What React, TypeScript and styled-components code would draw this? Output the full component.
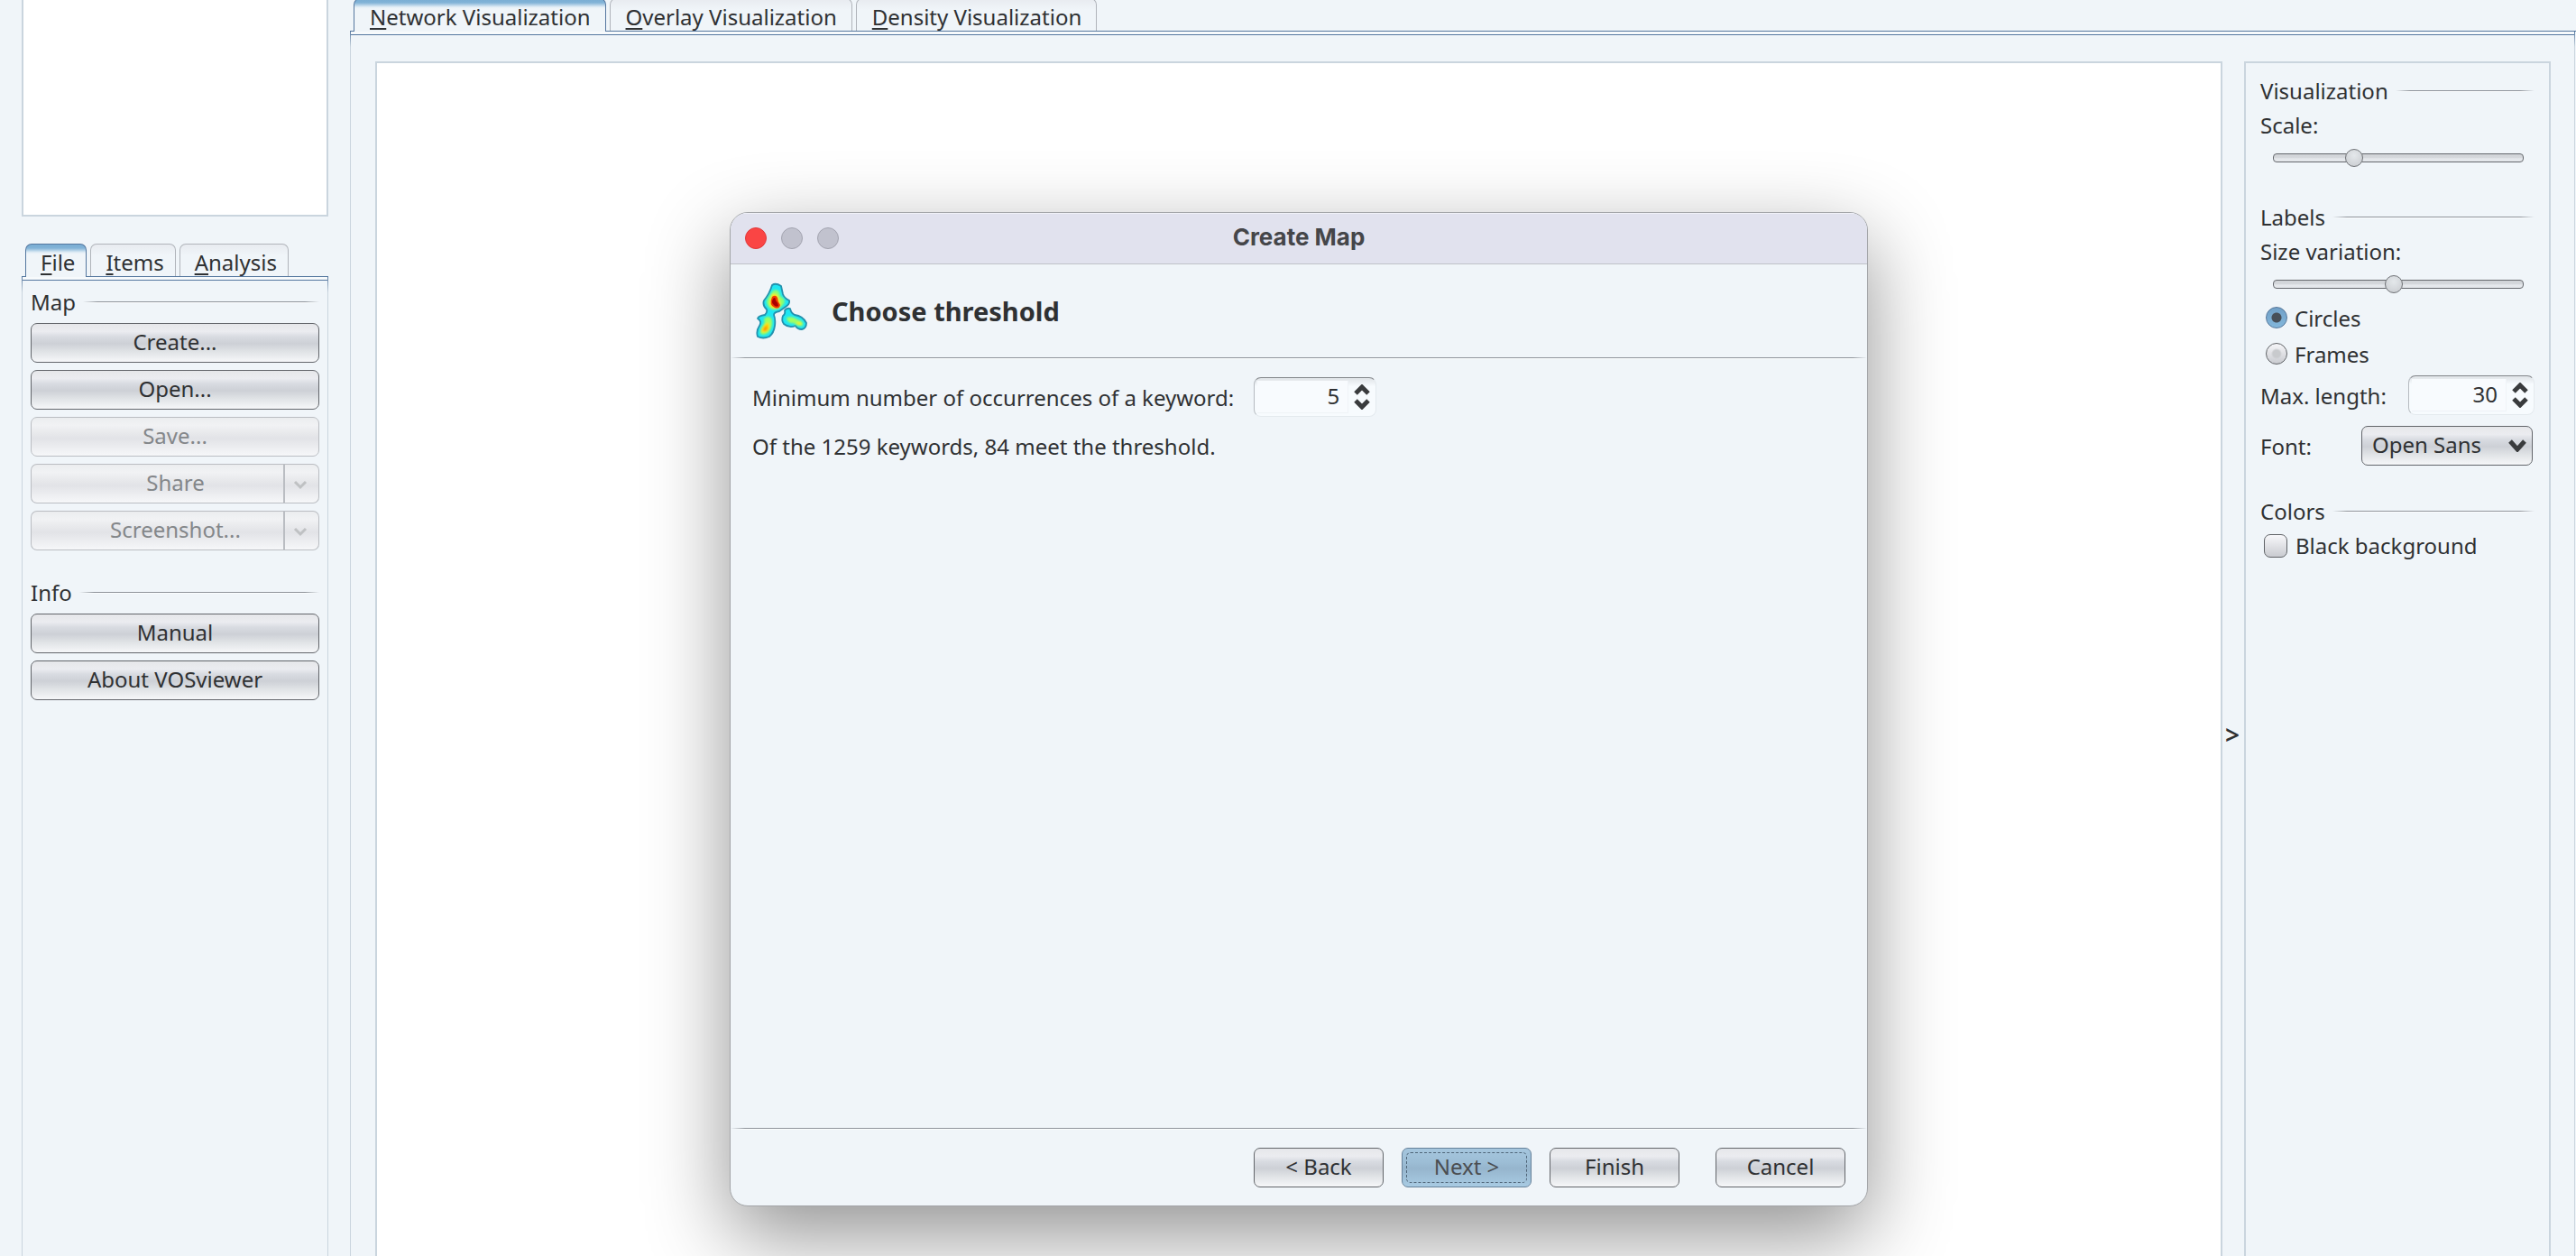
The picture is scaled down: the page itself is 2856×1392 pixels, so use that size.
import React from "react";
import styled, { createGlobalStyle, css } from "styled-components";

const color = {
  panel: "#f0f5f9",
  frame: "#cad5de",
  text: "#2f3133",
  muted: "#84878a",
  tabLine: "#55779f",
  tabIdle: "#b0b4ba",
};

const uiFont = '"Noto Sans", "Open Sans", sans-serif';

const GlobalStyle = createGlobalStyle`
  *, *::before, *::after { box-sizing: border-box; }
  body {
    margin: 0;
    background: ${color.panel};
    color: ${color.text};
    font-family: ${uiFont};
    font-size: 24px;
    line-height: 32px;
  }
  button, input, select {
    margin: 0;
    font: inherit;
    color: inherit;
  }
`;

/* ---------- window layout ---------- */

const Viewport = styled.div`
  height: 100vh;
  overflow: hidden;
`;

const Workspace = styled.div`
  display: flex;
  height: calc(100vh + 168px);
`;

const LeftColumn = styled.aside`
  display: flex;
  flex-direction: column;
  flex: 0 0 388px;
  padding: 0 24px;
`;

const Overview = styled.div`
  flex: none;
  height: 240px;
  margin-bottom: 30px;
  background: #fff;
  border: 2px solid ${color.frame};
  border-top: 0;
`;

const MainColumn = styled.main`
  display: flex;
  flex-direction: column;
  flex: 1;
  min-width: 0;
  margin-top: -2px;
`;

const TabStrip = styled.div`
  display: flex;
  gap: 4px;
  flex: none;
  height: 37px;
  padding-left: 4px;
  border-bottom: 1px solid ${color.tabLine};
`;

const Tab = styled.button<{ $active?: boolean; $wide?: boolean }>`
  height: 36px;
  padding: 4px ${(p) => (p.$wide ? 16 : 12)}px 0 ${(p) => (p.$wide ? 17 : 16)}px;
  border: 1px solid ${color.tabIdle};
  border-bottom: 0;
  border-radius: 7px 7px 0 0;
  background: linear-gradient(#e8ebf0, ${color.panel} 12px);
  line-height: 30px;
  white-space: nowrap;
  ${(p) =>
    p.$active &&
    css`
      height: 37px;
      border-color: ${color.tabLine};
      background: linear-gradient(#79add3, #82b3d7 4px, #e6f0f7 9px, ${color.panel} 11px);
    `}
`;

const Mnemonic = styled.span`
  text-decoration: underline;
  text-decoration-thickness: 2px;
  text-underline-offset: 3px;
  text-decoration-skip-ink: none;
`;

const TabBody = styled.div`
  display: flex;
  flex: 1;
  min-height: 0;
  border: 1px solid;
  border-bottom: 0;
  border-image: linear-gradient(${color.tabLine}, ${color.frame} 18px) 1;
  background: linear-gradient(#f7fafc 3px, ${color.tabLine} 3px, ${color.tabLine} 4px, transparent 4px);
`;

const FilePanel = styled(TabBody)`
  flex-direction: column;
  gap: 8px;
  border-top: 0;
  padding: 11px 9px 0;
`;

const MainPanel = styled(TabBody)`
  margin-right: 1px;
  border-top: 0;
  padding: 33px 26px 0 27px;
`;

const Canvas = styled.div`
  position: relative;
  flex: 1;
  min-width: 0;
  background: #fff;
  border: 2px solid ${color.frame};
`;

const Collapse = styled.button`
  flex: 0 0 24px;
  padding: 0 2px 0 0;
  border: 0;
  background: none;
  font-size: 28px;
  font-weight: 600;
  text-align: center;
`;

const Options = styled.aside`
  display: flex;
  flex-direction: column;
  flex: 0 0 340px;
  padding: 14px 16px 0;
  border: 2px solid ${color.frame};
`;

/* ---------- shared controls ---------- */

const HeadingRow = styled.h2<{ $spaced?: boolean }>`
  display: flex;
  align-items: center;
  gap: 8px;
  margin: ${(p) => (p.$spaced ? "22px 0 0" : "0")};
  padding-top: 2px;
  font-size: 24px;
  font-weight: 400;
  line-height: 30px;
`;

const Rule = styled.span`
  flex: 1;
  height: 2px;
  background:
    linear-gradient(90deg, transparent, #8f949b 16px, #8f949b calc(100% - 16px), transparent) top / 100% 1px no-repeat,
    linear-gradient(90deg, transparent, #fbfdfe 16px, #fbfdfe calc(100% - 16px), transparent) bottom / 100% 1px no-repeat;
`;

const glossy = css`
  border: 1px solid #62656a;
  border-radius: 7px;
  background: linear-gradient(#e6e7ea, #ebecf0 20%, #d8dbe1 34%, #cdd0d6 52%, #dfe2e5 72%, #f6f7f9);
`;

const Button = styled.button`
  flex: none;
  height: 44px;
  padding: 0 8px 2px;
  ${glossy}
  &:disabled {
    border-color: #babdc2;
    background: linear-gradient(#ebedef, #f1f2f4 20%, #e6e7ea 45%, #e2e3e7 55%, #f6f7f9);
    color: ${color.muted};
  }
`;

const Split = styled.div`
  display: flex;
  flex: none;
`;

const SplitMain = styled(Button)`
  flex: 1;
  padding-left: 48px;
  border-right: 0;
  border-radius: 7px 0 0 7px;
`;

const SplitArrow = styled(Button)`
  flex: 0 0 40px;
  display: flex;
  align-items: center;
  justify-content: center;
  padding: 2px 4px 0 0;
  border-left-width: 2px;
  border-radius: 0 7px 7px 0;
`;

const SpinBox = styled.span<{ $width: number }>`
  display: flex;
  flex: none;
  width: ${(p) => p.$width}px;
  height: 44px;
  border: 1px solid #e4eaee;
  border-top-color: #85888c;
  border-left-color: #b5babf;
  border-radius: 8px;
  background: linear-gradient(#dfe3e7, #f7fbfe 9px);
`;

const SpinInput = styled.input`
  flex: 1;
  min-width: 0;
  margin: 3px 0 3px 3px;
  padding: 0 9px 2px 0;
  border: 0;
  border-right: 1px solid #eff3f7;
  border-bottom: 1px solid #eff3f7;
  background: #f8fbfe;
  text-align: right;
`;

const SpinButtons = styled.span`
  display: flex;
  flex-direction: column;
  justify-content: center;
  gap: 4px;
  flex: 0 0 30px;
`;

const SpinButton = styled.button`
  display: flex;
  justify-content: center;
  padding: 0;
  border: 0;
  background: none;
`;

const Slider = styled.input`
  appearance: none;
  display: block;
  height: 30px;
  margin: 6px 12px 0 14px;
  background: none;
  &::-webkit-slider-runnable-track {
    height: 10px;
    border: 1px solid #66696e;
    border-radius: 4px;
    background: linear-gradient(#d0d3d7, #d5d8dc 50%, #e6e9ed 60%, #e3e6ea);
  }
  &::-webkit-slider-thumb {
    appearance: none;
    width: 20px;
    height: 20px;
    margin-top: -6px;
    border: 1px solid #6f7276;
    border-radius: 50%;
    background: radial-gradient(circle at 50% 35%, #e4e8eb, #cdd0d4 80%);
  }
`;

const Caption = styled.label<{ $spaced?: boolean }>`
  margin-top: ${(p) => (p.$spaced ? "6px" : "0")};
  padding-top: 2px;
  line-height: 30px;
`;

const OptionGap = styled.div`
  flex: none;
  height: 34px;
`;

const ChoiceList = styled.div`
  margin-top: 6px;
`;

const Choice = styled.label`
  display: flex;
  align-items: center;
  gap: 8px;
  margin-bottom: 8px;
  padding-left: 6px;
`;

const ChoiceText = styled.span`
  padding-top: 2px;
  line-height: 30px;
`;

const Radio = styled.input`
  appearance: none;
  width: 24px;
  height: 24px;
  border: 1px solid #606367;
  border-radius: 50%;
  background: radial-gradient(circle, #c8cacd 4px, transparent 6px), linear-gradient(#f6f6f9, #c9cbd0);
  &:checked {
    border-color: #57779a;
    background: radial-gradient(circle, #474f58 5px, transparent 6px), linear-gradient(#71a0c7, #83b7db);
  }
`;

const Check = styled.input`
  appearance: none;
  width: 26px;
  height: 26px;
  border: 1px solid #606367;
  border-radius: 7px;
  background: linear-gradient(#f8f8fb, #c9cbd0);
`;

const CheckRow = styled.label`
  display: flex;
  align-items: center;
  gap: 9px;
  margin-top: 7px;
  padding-left: 4px;
`;

const Field = styled.div`
  display: flex;
  align-items: center;
  justify-content: space-between;
`;

const FontField = styled(Field)`
  margin: 12px 2px 12px 0;
`;

const SelectBox = styled.span`
  display: grid;
  align-items: center;
  width: 190px;
  > * {
    grid-area: 1 / 1;
  }
  > svg {
    justify-self: end;
    margin-right: 7px;
    pointer-events: none;
  }
`;

const Select = styled.select`
  appearance: none;
  height: 44px;
  padding: 0 11px 2px;
  ${glossy}
`;

/* ---------- dialog ---------- */

const Dialog = styled.section`
  position: absolute;
  top: 165px;
  left: 50%;
  display: flex;
  flex-direction: column;
  width: min(1262px, 90%);
  height: min(1102px, 90%);
  overflow: hidden;
  transform: translateX(-50%);
  border: 1px solid #a3a5a8;
  border-radius: 20px;
  background: ${color.panel};
  box-shadow: 0 32px 90px rgba(0, 0, 0, 0.43);
`;

const TitleBar = styled.header`
  display: grid;
  grid-template-columns: 1fr auto 1fr;
  align-items: center;
  flex: 0 0 57px;
  padding: 0 16px;
  border-bottom: 1px solid #c0c2c8;
  background: #e1e2ee;
  box-shadow: inset 0 1px #f1f2f8;
`;

const Lights = styled.div`
  display: flex;
  gap: 16px;
`;

const Light = styled.button<{ $close?: boolean }>`
  width: 24px;
  height: 24px;
  padding: 0;
  border: 1px solid ${(p) => (p.$close ? "#e0383a" : "#a3a4b0")};
  border-radius: 50%;
  background: ${(p) => (p.$close ? "#fa4544" : "#c1c2ce")};
`;

const DialogTitle = styled.h1`
  margin: 0;
  padding-bottom: 2px;
  color: #454649;
  font: 700 26px/30px Inter, sans-serif;
`;

const StepHeader = styled.div`
  display: flex;
  align-items: center;
  gap: 26px;
  flex: 0 0 103px;
  padding: 0 28px;
`;

const StepTitle = styled.h2`
  margin: 0;
  font-size: 29px;
  font-weight: 700;
  line-height: 40px;
`;

const DialogRule = styled(Rule)`
  flex: none;
`;

const DialogBody = styled.div`
  display: flex;
  flex-direction: column;
  gap: 16px;
  flex: 1;
  padding: 20px 24px;
`;

const Inline = styled.div`
  display: flex;
  align-items: center;
  gap: 22px;
`;

const Line = styled.p`
  margin: 0;
  padding-top: 2px;
  line-height: 30px;
`;

const Actions = styled.footer`
  display: flex;
  justify-content: flex-end;
  gap: 20px;
  padding: 20px 24px;
`;

const ActionButton = styled(Button)`
  width: 144px;
  &:last-child {
    margin-left: 20px;
  }
`;

const DefaultButton = styled(ActionButton)`
  padding: 4px;
  border-color: #66819a;
  background: linear-gradient(#a5c6de, #9dbed6 35%, #96b5cd 52%, #a8cbe3);
  color: #4b4e51;
`;

const FocusRing = styled.span`
  display: block;
  height: 34px;
  border: 1px dashed #4f6578;
  border-radius: 5px;
  line-height: 30px;
`;

/* ---------- drawings ---------- */

const Chevron = ({ up = false, w = 18, h = 12, stroke = "#393b3d", weight = 5 }) => (
  <svg width={w} height={h} viewBox={`0 0 ${w} ${h}`} aria-hidden="true">
    <path
      d={up ? `M2 ${h - 2} L${w / 2} 3 L${w - 2} ${h - 2}` : `M2 2 L${w / 2} ${h - 3} L${w - 2} 2`}
      fill="none"
      stroke={stroke}
      strokeWidth={weight}
    />
  </svg>
);

const DensityLogo = () => (
  <svg width="58" height="64" viewBox="0 0 58 64" aria-hidden="true">
    <defs>
      <filter id="heat" x="-50%" y="-50%" width="200%" height="200%">
        <feGaussianBlur stdDeviation="1.2" />
      </filter>
    </defs>
    <g fill="#1fe6f2" stroke="#2391ad" strokeWidth="1.8" strokeLinejoin="round">
      <path d="M18 3 Q22 0 28 4 L30 13 Q31 17 37 20 Q38 24 33 27 L26 32 Q20 33 20 36 Q22 41 21 48 Q20 56 15 60 Q8 63 2 60 Q0 54 4 48 Q7 43 2 40 Q3 37 10 36 Q13 33 12 30 Q7 25 9 20 Q15 13 18 3Z" />
      <path d="M32 31 Q34 28 38 29 Q39 34 43 36 Q52 37 56 45 Q56 51 51 52 Q46 52 44 48 Q37 51 31 46 Q28 42 30 37 Q33 35 32 31Z" />
    </g>
    <g filter="url(#heat)">
      <path d="M19 9 Q26 6 27 15 Q35 20 30 25 Q24 32 16 29 Q10 23 13 18Z" fill="#8dff70" />
      <path d="M13 38 Q19 38 18 47 Q16 57 8 58 Q3 57 6 50 Q11 44 9 40Z" fill="#9dff5b" />
      <path d="M34 39 Q41 37 46 41 Q54 43 52 48 Q46 49 42 45 Q35 46 34 39Z" fill="#a0ff62" />
      <path d="M18 13 Q24 12 25 17 Q30 26 24 29 Q15 30 15 22Z" fill="#ffe000" />
      <path d="M13 44 Q17 48 14 53 Q9 57 6 54 Q7 49 13 44Z" fill="#ffd800" />
      <path d="M12 48 Q14 51 11 54 Q7 54 9 50Z" fill="#ff9a00" />
      <path d="M46 44 Q51 44 50 47 Q47 48 45 45Z" fill="#f2ef1e" />
    </g>
    <path d="M18 16 Q22 13 24 17 Q24 21 27 25 Q26 30 21 28 Q14 25 18 16Z" fill="#f03a00" />
    <path d="M19 18 Q22 15 22 20 Q25 23 25 26 Q22 28 19 24 Q17 22 19 18Z" fill="#a90000" />
  </svg>
);

/* ---------- composed parts ---------- */

const Heading = ({ children, spaced }: { children: React.ReactNode; spaced?: boolean }) => (
  <HeadingRow $spaced={spaced}>
    {children}
    <Rule />
  </HeadingRow>
);

const TabButton = ({ label, active, wide }: { label: string; active?: boolean; wide?: boolean }) => (
  <Tab type="button" role="tab" aria-selected={!!active} $active={active} $wide={wide}>
    <Mnemonic>{label[0]}</Mnemonic>
    {label.slice(1)}
  </Tab>
);

const SplitButton = ({ label }: { label: string }) => (
  <Split>
    <SplitMain type="button" disabled>
      {label}
    </SplitMain>
    <SplitArrow type="button" disabled aria-label={`${label} menu`}>
      <Chevron w={16} h={11} stroke="#bfc1c3" weight={3} />
    </SplitArrow>
  </Split>
);

const Spinner = ({ id, value, width }: { id: string; value: string; width: number }) => (
  <SpinBox $width={width}>
    <SpinInput id={id} defaultValue={value} />
    <SpinButtons>
      <SpinButton type="button" aria-label="Increase">
        <Chevron up />
      </SpinButton>
      <SpinButton type="button" aria-label="Decrease">
        <Chevron />
      </SpinButton>
    </SpinButtons>
  </SpinBox>
);

const CreateMapDialog = () => (
  <Dialog role="dialog" aria-labelledby="dialog-title">
    <TitleBar>
      <Lights>
        <Light type="button" $close aria-label="Close" />
        <Light type="button" aria-label="Minimize" />
        <Light type="button" aria-label="Zoom" />
      </Lights>
      <DialogTitle id="dialog-title">Create Map</DialogTitle>
    </TitleBar>
    <StepHeader>
      <DensityLogo />
      <StepTitle>Choose threshold</StepTitle>
    </StepHeader>
    <DialogRule />
    <DialogBody>
      <Inline>
        <Caption htmlFor="occurrences">Minimum number of occurrences of a keyword:</Caption>
        <Spinner id="occurrences" value="5" width={136} />
      </Inline>
      <Line>Of the 1259 keywords, 84 meet the threshold.</Line>
    </DialogBody>
    <DialogRule />
    <Actions>
      <ActionButton type="button">&lt; Back</ActionButton>
      <DefaultButton type="button">
        <FocusRing>Next &gt;</FocusRing>
      </DefaultButton>
      <ActionButton type="button">Finish</ActionButton>
      <ActionButton type="button">Cancel</ActionButton>
    </Actions>
  </Dialog>
);

export default function App() {
  return (
    <Viewport>
      <GlobalStyle />
      <Workspace>
        <LeftColumn>
          <Overview />
          <TabStrip role="tablist">
            <TabButton label="File" active />
            <TabButton label="Items" />
            <TabButton label="Analysis" />
          </TabStrip>
          <FilePanel>
            <Heading>Map</Heading>
            <Button type="button">Create...</Button>
            <Button type="button">Open...</Button>
            <Button type="button" disabled>
              Save...
            </Button>
            <SplitButton label="Share" />
            <SplitButton label="Screenshot..." />
            <Heading spaced>Info</Heading>
            <Button type="button">Manual</Button>
            <Button type="button">About VOSviewer</Button>
          </FilePanel>
        </LeftColumn>

        <MainColumn>
          <TabStrip role="tablist">
            <TabButton label="Network Visualization" active wide />
            <TabButton label="Overlay Visualization" wide />
            <TabButton label="Density Visualization" wide />
          </TabStrip>
          <MainPanel>
            <Canvas>
              <CreateMapDialog />
            </Canvas>
            <Collapse type="button">&gt;</Collapse>
            <Options>
              <Heading>Visualization</Heading>
              <Caption $spaced htmlFor="scale">
                Scale:
              </Caption>
              <Slider id="scale" type="range" defaultValue={31} />
              <OptionGap />
              <Heading>Labels</Heading>
              <Caption $spaced htmlFor="variation">
                Size variation:
              </Caption>
              <Slider id="variation" type="range" defaultValue={48} />
              <ChoiceList>
                <Choice>
                  <Radio type="radio" name="shape" defaultChecked />
                  <ChoiceText>Circles</ChoiceText>
                </Choice>
                <Choice>
                  <Radio type="radio" name="shape" />
                  <ChoiceText>Frames</ChoiceText>
                </Choice>
              </ChoiceList>
              <Field>
                <Caption htmlFor="max-length">Max. length:</Caption>
                <Spinner id="max-length" value="30" width={140} />
              </Field>
              <FontField>
                <Caption htmlFor="font">Font:</Caption>
                <SelectBox>
                  <Select id="font" defaultValue="Open Sans">
                    <option>Open Sans</option>
                  </Select>
                  <Chevron w={20} h={14} />
                </SelectBox>
              </FontField>
              <Heading spaced>Colors</Heading>
              <CheckRow>
                <Check type="checkbox" />
                Black background
              </CheckRow>
            </Options>
          </MainPanel>
        </MainColumn>
      </Workspace>
    </Viewport>
  );
}
